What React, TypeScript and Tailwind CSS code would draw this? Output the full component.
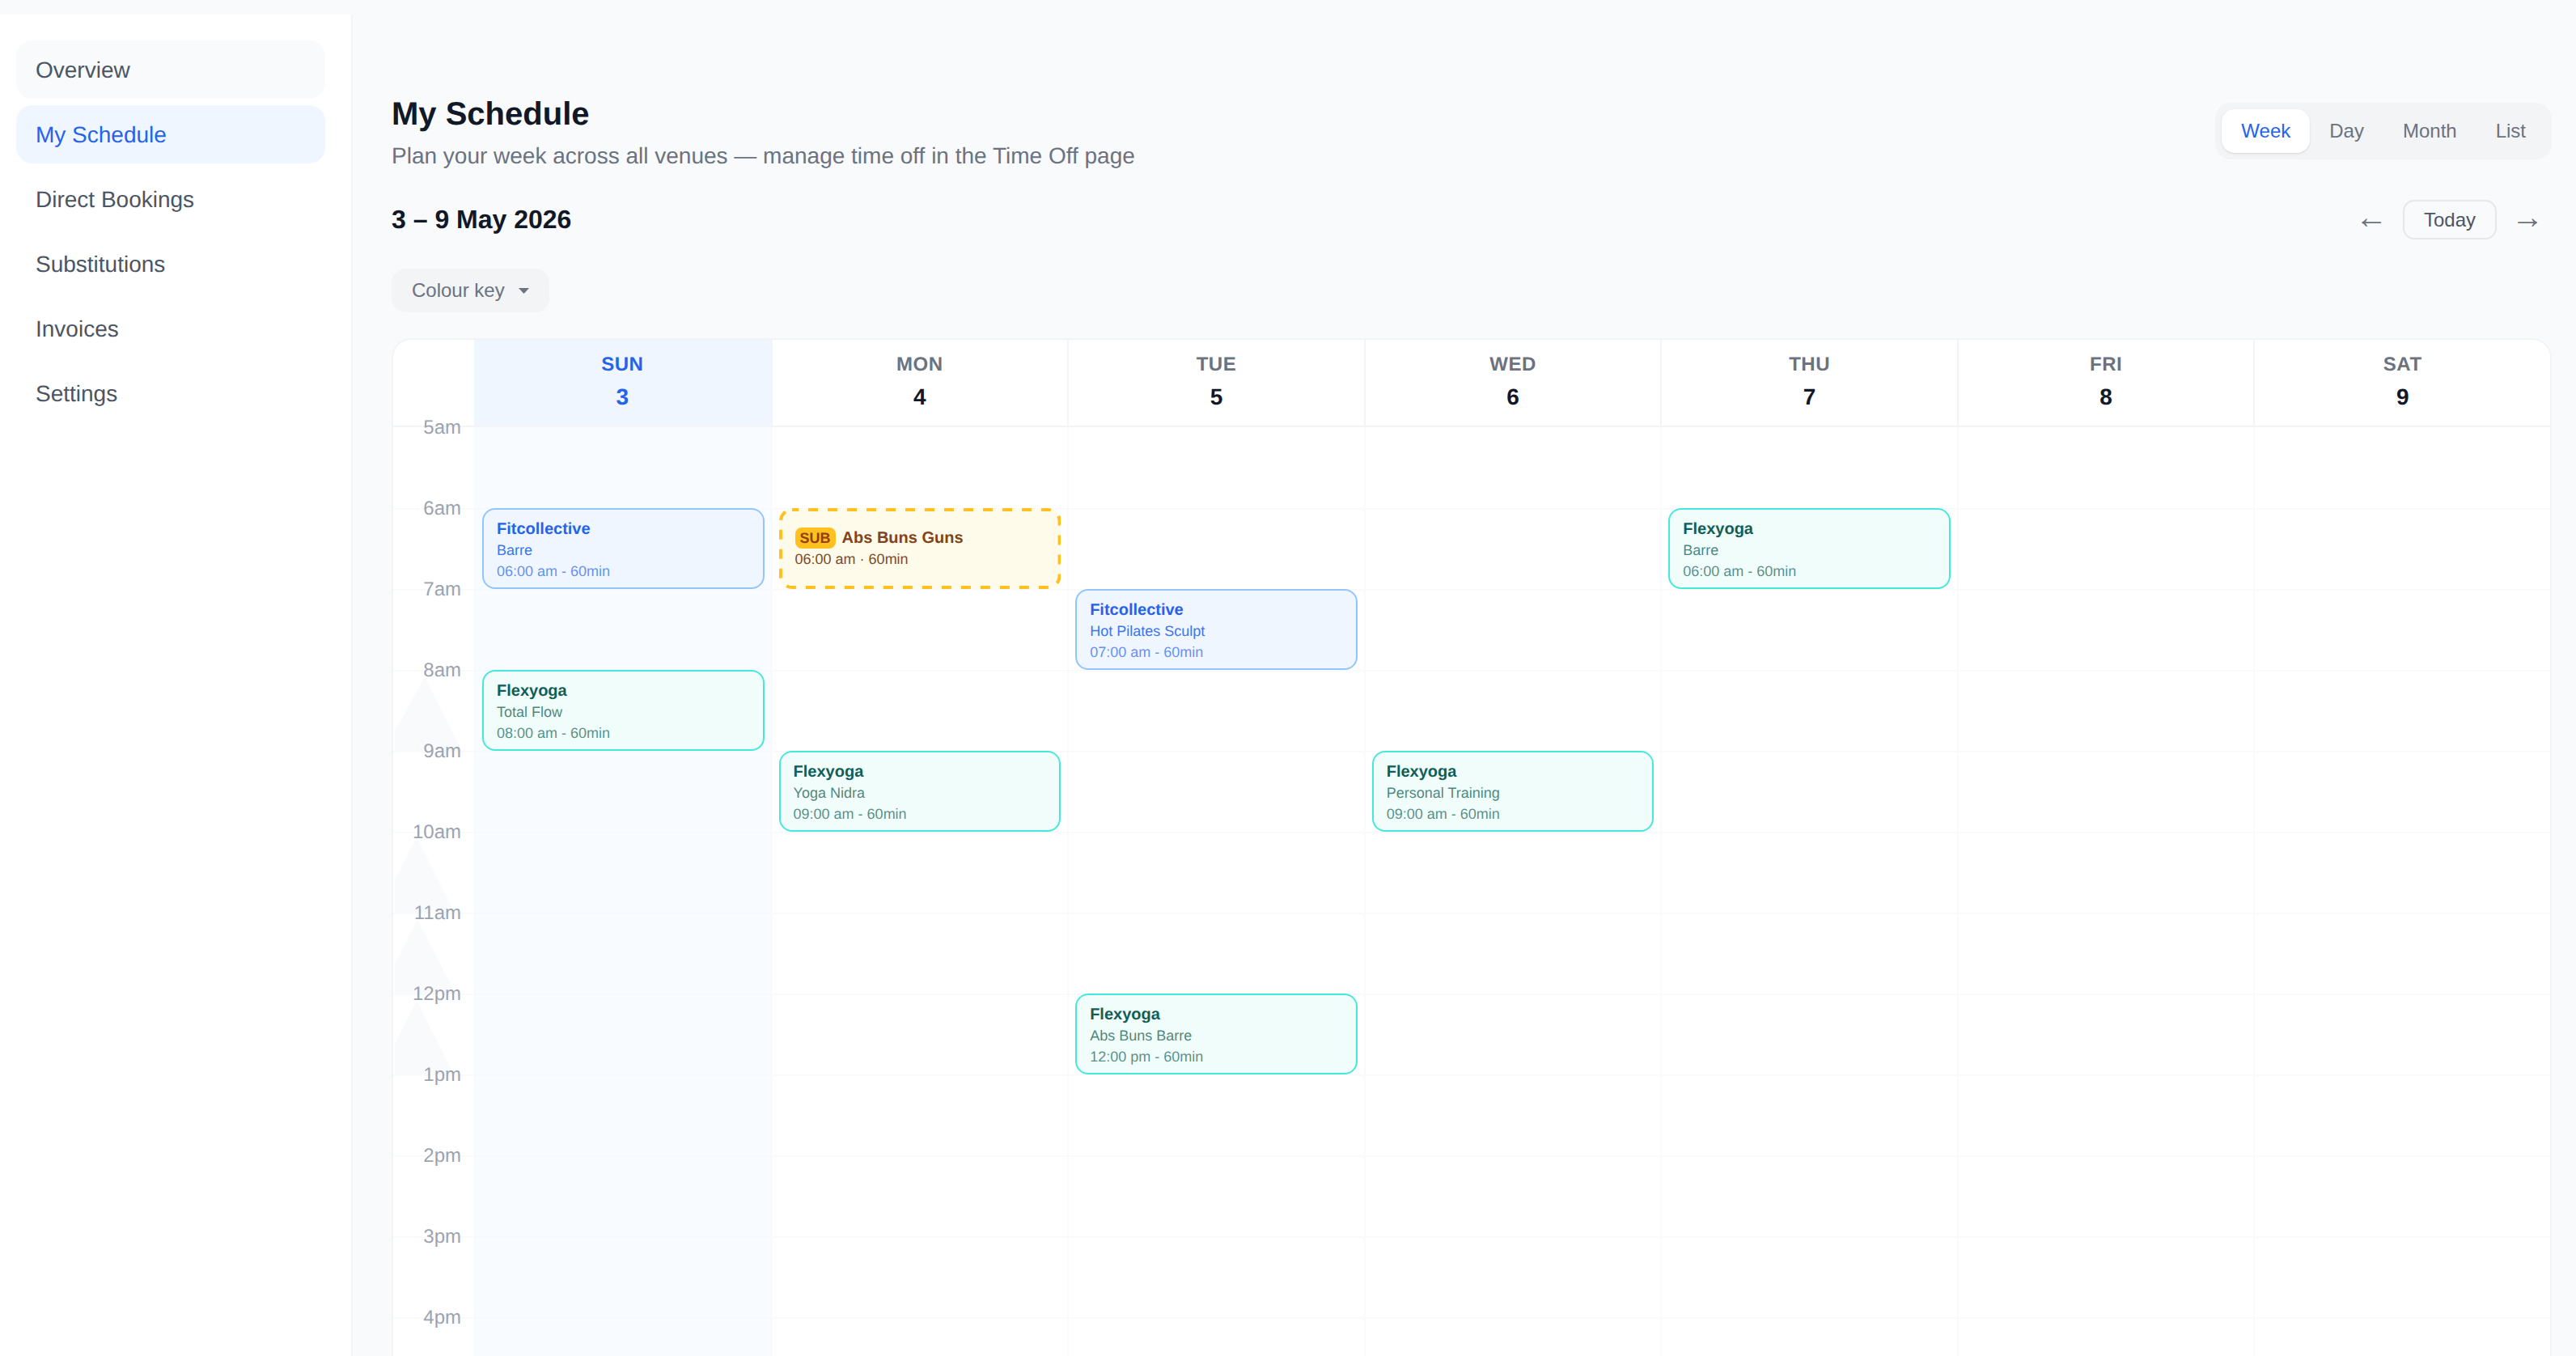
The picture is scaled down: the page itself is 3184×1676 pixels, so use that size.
import { memo } from 'react';

interface ScheduleEvent {
  day: number;
  hour: number;
  kind: 'fit' | 'flex' | 'sub';
  title: string;
  subtitle?: string;
  time: string;
}

const navItems = ['Overview', 'My Schedule', 'Direct Bookings', 'Substitutions', 'Invoices', 'Settings'];
const days = [
  { name: 'SUN', date: 3 },
  { name: 'MON', date: 4 },
  { name: 'TUE', date: 5 },
  { name: 'WED', date: 6 },
  { name: 'THU', date: 7 },
  { name: 'FRI', date: 8 },
  { name: 'SAT', date: 9 },
];
const hours = ['5am', '6am', '7am', '8am', '9am', '10am', '11am', '12pm', '1pm', '2pm', '3pm', '4pm'];

const events: ScheduleEvent[] = [
  { day: 0, hour: 1, kind: 'fit', title: 'Fitcollective', subtitle: 'Barre', time: '06:00 am - 60min' },
  { day: 0, hour: 3, kind: 'flex', title: 'Flexyoga', subtitle: 'Total Flow', time: '08:00 am - 60min' },
  { day: 1, hour: 1, kind: 'sub', title: 'Abs Buns Guns', time: '06:00 am · 60min' },
  { day: 1, hour: 4, kind: 'flex', title: 'Flexyoga', subtitle: 'Yoga Nidra', time: '09:00 am - 60min' },
  { day: 2, hour: 2, kind: 'fit', title: 'Fitcollective', subtitle: 'Hot Pilates Sculpt', time: '07:00 am - 60min' },
  { day: 2, hour: 7, kind: 'flex', title: 'Flexyoga', subtitle: 'Abs Buns Barre', time: '12:00 pm - 60min' },
  { day: 3, hour: 4, kind: 'flex', title: 'Flexyoga', subtitle: 'Personal Training', time: '09:00 am - 60min' },
  { day: 4, hour: 1, kind: 'flex', title: 'Flexyoga', subtitle: 'Barre', time: '06:00 am - 60min' },
];

// faint carets sitting behind the hour labels
const carets: Record<number, string> = {
  3: '2,100 2,76 39,8 85,100',
  5: '2,100 2,60 29,6 76,100',
  6: '2,100 2,64 30,8 77,100',
  7: '2,100 2,62 29,9 75,100',
};

function EventCard({ event }: { event: ScheduleEvent }) {
  if (event.kind === 'sub') {
    return (
      <div className="absolute left-[8px] right-[8px] top-[-2px] z-10 flex h-[100px] flex-col justify-center rounded-[16px] bg-[#fffbeb] pl-[20px]">
        <svg className="absolute inset-0 h-full w-full" fill="none">
          <rect x="2" y="2" width="344.6" height="96" rx="14" stroke="#ffc020" strokeWidth="4" strokeDasharray="12 12" strokeDashoffset="4" />
        </svg>
        <div className="relative flex items-center gap-[8px]">
          <span className="rounded-[8px] bg-[#ffc020] px-[6px] text-[18px] leading-[26px] font-bold text-[#92400e]">SUB</span>
          <span className="text-[20px] leading-[26px] font-bold text-[#80431a]">{event.title}</span>
        </div>
        <div className="relative text-[18px] leading-[27px] text-[#7c4a28]">{event.time}</div>
      </div>
    );
  }
  const fit = event.kind === 'fit';
  return (
    <div
      className={
        fit
          ? 'absolute left-[8px] right-[8px] top-[-2px] z-10 h-[100px] rounded-[16px] border-2 border-[#93c5fd] bg-[#eff6ff] pt-[11px] pl-[16px]'
          : 'absolute left-[8px] right-[8px] top-[-2px] z-10 h-[100px] rounded-[16px] border-2 border-[#45e9d9] bg-[#f0fdfa] pt-[11px] pl-[16px]'
      }
    >
      <div className={fit ? 'text-[20px] leading-[26px] font-bold text-[#2563eb]' : 'text-[20px] leading-[26px] font-bold text-[#115e59]'}>
        {event.title}
      </div>
      <div className={fit ? 'text-[18px] leading-[26px] text-[#2563eb]/90' : 'text-[18px] leading-[26px] text-[#115e59]/75'}>
        {event.subtitle}
      </div>
      <div className={fit ? 'text-[18px] leading-[26px] text-[#2563eb]/70' : 'text-[18px] leading-[26px] text-[#115e59]/70'}>
        {event.time}
      </div>
    </div>
  );
}

const ScheduleGrid = memo(function ScheduleGrid() {
  return (
    <div className="mt-[32px] grid grid-cols-[100px_repeat(7,1fr)] rounded-t-[24px] border-2 border-b-0 border-[#f3f4f6] bg-white">
      <div className="h-[108px] rounded-tl-[22px] border-b-2 border-[#f3f4f6]" />
      {days.map((d, i) => (
        <div
          key={d.name}
          className={
            i === 0
              ? 'flex h-[108px] flex-col items-center border-b-2 border-[#f3f4f6] bg-[#eff6ff] pt-[13px]'
              : 'flex h-[108px] flex-col items-center border-b-2 border-l-2 border-[#f3f4f6] pt-[13px]'
          }
        >
          <span className={i === 0 ? 'text-[24px] leading-[36px] font-bold tracking-[0.5px] text-[#2563eb]' : 'text-[24px] leading-[36px] font-bold tracking-[0.5px] text-[#6b7280]'}>
            {d.name}
          </span>
          <span className={i === 0 ? 'mt-[2px] text-[28px] leading-[40px] font-bold text-[#2563eb]' : 'mt-[2px] text-[28px] leading-[40px] font-bold text-[#111827]'}>
            {d.date}
          </span>
        </div>
      ))}
      {hours.map((label, h) => (
        <div key={label} className="contents">
          <div className={h === 0 ? 'relative h-[100px] border-t-2 border-transparent' : 'relative h-[100px] border-t-2 border-[#f9fafb]'}>
            {carets[h] && (
              <svg className="absolute left-0 top-[-2px]" width="100" height="100" viewBox="0 0 100 100">
                <polygon points={carets[h]} fill="#f9fafb" />
              </svg>
            )}
            <span className="absolute right-[16px] top-[-17px] z-20 text-[24px] leading-[32px] text-[#9ca3af]">{label}</span>
          </div>
          {days.map((d, i) => {
            const ev = events.find((e) => e.day === i && e.hour === h);
            return (
              <div
                key={d.name}
                className={
                  i === 0
                    ? h === 0
                      ? 'relative h-[100px] border-l-2 border-[#f8fbff] bg-[#f8fbff]'
                      : 'relative h-[100px] border-t-2 border-l-2 border-[#f6f9fd] bg-[#f8fbff]'
                    : h === 0
                      ? 'relative h-[100px] border-l-2 border-[#f9fafb]'
                      : 'relative h-[100px] border-t-2 border-l-2 border-[#f9fafb]'
                }
              >
                {ev && <EventCard event={ev} />}
              </div>
            );
          })}
        </div>
      ))}
    </div>
  );
});

export default function App() {
  return (
    <div className="flex h-[1676px] overflow-hidden bg-[#f9fafb] font-['Liberation_Sans',Arial,sans-serif] antialiased [text-rendering:geometricPrecision]">
      <aside className="mt-[18px] flex w-[436px] shrink-0 flex-col gap-[8px] border-r-2 border-[#f3f4f6] bg-white pt-[32px] pr-[32px] pl-[20px]">
        {navItems.map((item, i) => (
          <div
            key={item}
            className={
              i === 1
                ? 'flex h-[72px] items-center rounded-[20px] bg-[#eff6ff] pt-[1px] pl-[24px] text-[28px] text-[#2563eb]'
                : i === 0
                  ? 'flex h-[72px] items-center rounded-[20px] bg-[#f9fafb] pt-[1px] pl-[24px] text-[28px] text-[#4b5563]'
                  : 'flex h-[72px] items-center rounded-[20px] pt-[1px] pl-[24px] text-[28px] text-[#4b5563]'
            }
          >
            {item}
          </div>
        ))}
      </aside>
      <main className="min-w-0 flex-1 pt-[117px] pr-[30px] pl-[48px]">
        <div className="flex items-start justify-between">
          <div>
            <h1 className="text-[40px] leading-[48px] font-bold text-[#111827]">My Schedule</h1>
            <p className="mt-[8px] text-[28px] leading-[40px] text-[#6b7280]">
              Plan your week across all venues — manage time off in the Time Off page
            </p>
          </div>
          <div className="mt-[10px] flex rounded-[20px] bg-[#f3f4f6] p-[8px]">
            <button className="rounded-[16px] bg-white px-[24px] py-[9px] text-[24px] leading-[36px] text-[#2563eb] shadow-sm">Week</button>
            <button className="px-[24px] py-[9px] text-[24px] leading-[36px] text-[#6b7280]">Day</button>
            <button className="px-[24px] py-[9px] text-[24px] leading-[36px] text-[#6b7280]">Month</button>
            <button className="px-[24px] py-[9px] text-[24px] leading-[36px] text-[#6b7280]">List</button>
          </div>
        </div>
        <div className="mt-[34px] flex h-[49px] items-center justify-between">
          <h2 className="pb-[2px] text-[32px] leading-[40px] font-bold text-[#111827]">3 – 9 May 2026</h2>
          <div className="flex items-center">
            <button className="w-[60px] pb-[6px] text-center text-[40px] leading-[49px] text-[#6b7280]">←</button>
            <button className="ml-[9px] h-[49px] rounded-[14px] border-2 border-[#e5e7eb] px-[24px] text-[24px] text-[#4b5563]">Today</button>
            <button className="ml-[8px] w-[60px] pb-[6px] text-center text-[40px] leading-[49px] text-[#6b7280]">→</button>
          </div>
        </div>
        <button className="mt-[36px] flex h-[54px] items-center gap-[17px] rounded-[18px] bg-[#f3f4f6] px-[25px] text-[24px] text-[#6b7280]">
          Colour key
          <svg width="13" height="7" viewBox="0 0 13 7">
            <polygon points="0,0 13,0 6.5,7" fill="#6b7280" />
          </svg>
        </button>
        <ScheduleGrid />
      </main>
    </div>
  );
}
